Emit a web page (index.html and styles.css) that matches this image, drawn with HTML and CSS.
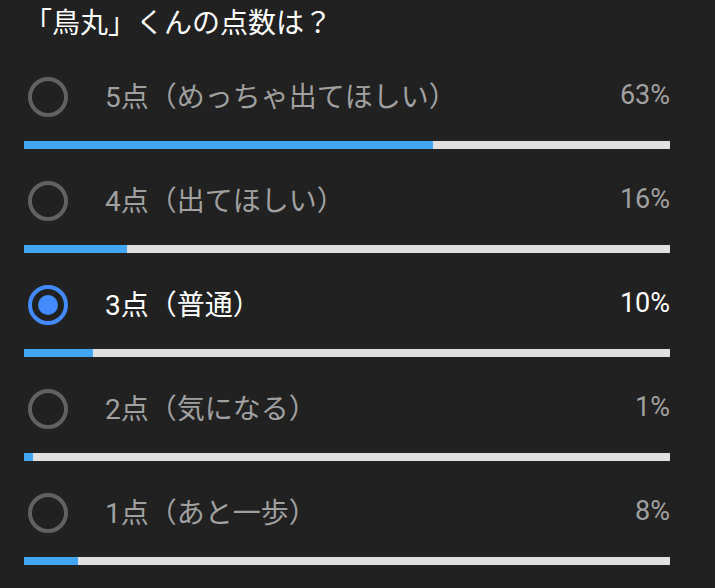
FILE: index.html
```html
<!DOCTYPE html>
<html lang="ja">
<head>
    <meta charset="UTF-8">
    <meta name="viewport" content="width=device-width, initial-scale=1.0">
    <link rel="stylesheet" href="styles.css">
    <title>投票</title>
</head>
<body>
    <div class="poll">
        <h1 class="question">「鳥丸」くんの点数は？</h1>

        <div class="option">
            <div class="option-row">
                <span class="radio"></span>
                <span class="label">5点（めっちゃ出てほしい）</span>
                <span class="percent">63%</span>
            </div>
            <div class="bar"><div class="bar-fill" style="width: 63.3%"></div></div>
        </div>

        <div class="option">
            <div class="option-row">
                <span class="radio"></span>
                <span class="label">4点（出てほしい）</span>
                <span class="percent">16%</span>
            </div>
            <div class="bar"><div class="bar-fill" style="width: 16%"></div></div>
        </div>

        <div class="option selected">
            <div class="option-row">
                <span class="radio"></span>
                <span class="label">3点（普通）</span>
                <span class="percent">10%</span>
            </div>
            <div class="bar"><div class="bar-fill" style="width: 10.7%"></div></div>
        </div>

        <div class="option">
            <div class="option-row">
                <span class="radio"></span>
                <span class="label">2点（気になる）</span>
                <span class="percent">1%</span>
            </div>
            <div class="bar"><div class="bar-fill" style="width: 1.4%"></div></div>
        </div>

        <div class="option">
            <div class="option-row">
                <span class="radio"></span>
                <span class="label">1点（あと一歩）</span>
                <span class="percent">8%</span>
            </div>
            <div class="bar"><div class="bar-fill" style="width: 8.4%"></div></div>
        </div>
    </div>
</body>
</html>
```

FILE: styles.css
```css
body {
    margin: 0;
    padding: 0;
    background-color: #212121;
    font-family: Roboto, "Noto Sans CJK JP", sans-serif;
}

.poll {
    padding: 0 45px 0 24px;
}

.question {
    margin: 0;
    padding: 6px 0 3px 0;
    font-size: 28px;
    font-weight: normal;
    line-height: 36px;
    color: #ffffff;
}

.option {
    padding-top: 32px;
}

.option-row {
    display: flex;
    align-items: center;
    height: 40px;
    padding-left: 4px;
}

.radio {
    box-sizing: border-box;
    width: 40px;
    height: 40px;
    border: 4px solid #616161;
    border-radius: 50%;
    flex-shrink: 0;
}

.label {
    flex: 1;
    margin-left: 37px;
    margin-top: -4px;
    font-size: 28px;
    color: #a0a0a0;
}

.percent {
    margin-top: -4px;
    font-size: 27px;
    color: #a0a0a0;
}

.selected .radio {
    border-color: #448aff;
    position: relative;
}

.selected .radio::after {
    content: "";
    position: absolute;
    top: 6px;
    left: 6px;
    width: 20px;
    height: 20px;
    border-radius: 50%;
    background-color: #448aff;
}

.selected .label,
.selected .percent {
    color: #ffffff;
}

.bar {
    margin-top: 24px;
    height: 8px;
    background-color: #e0e0e0;
}

.bar-fill {
    height: 100%;
    background-color: #42a5f5;
}
```
